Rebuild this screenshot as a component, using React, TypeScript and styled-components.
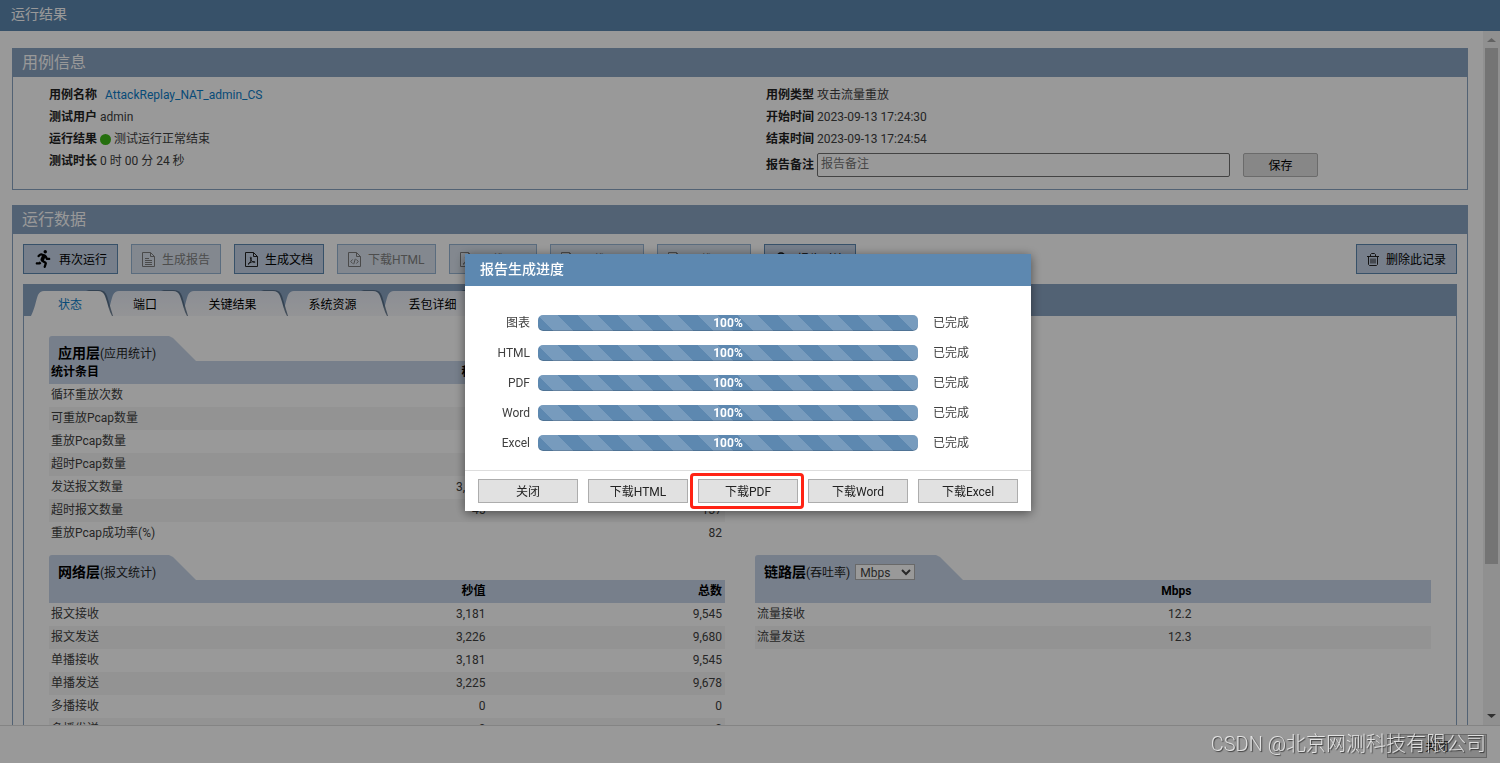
import React from "react";
import styled, { createGlobalStyle, css } from "styled-components";
import { FaRunning } from "react-icons/fa";

const blue = "#5d88b0";
const slate = "#89a3c1";
const pale = "#c6d4e8";

const GlobalStyle = createGlobalStyle`
  *, *::before, *::after { box-sizing: border-box; }
  body {
    margin: 0;
    background: #fff;
    color: #404040;
    font: 12px/22px Roboto, "Noto Sans CJK SC", sans-serif;
  }
  button, input, select { font-family: inherit; font-size: 12px; }
`;

const Page = styled.div`
  display: flex;
  flex-direction: column;
  height: 100vh;
  overflow: hidden;
`;

const PageHeader = styled.header`
  flex: none;
  height: 31px;
  padding: 0 11px;
  background: ${blue};
`;

const PageTitle = styled.h1`
  margin: 0;
  font-size: 14px;
  font-weight: 400;
  line-height: 28px;
  color: #fff;
`;

const Body = styled.div`
  flex: 1;
  min-height: 0;
  display: flex;
`;

const Content = styled.main`
  flex: 1;
  min-width: 0;
  overflow: hidden;
  padding: 17px 15px 0 12px;
  display: flex;
  flex-direction: column;
  gap: 15px;
`;

const ScrollTrack = styled.div`
  flex: none;
  width: 17px;
  padding: 0 2px;
  background: #f1f1f1;
  display: flex;
  flex-direction: column;
`;

const ScrollArrow = styled.svg`
  flex: none;
  width: 13px;
  height: 17px;
`;

const ScrollThumb = styled.div`
  flex: 516;
  background: #c1c1c1;
`;

const ScrollRest = styled.div`
  flex: 144;
`;

const PageFooter = styled.footer`
  flex: none;
  display: flex;
  justify-content: flex-end;
  height: 38px;
  padding: 8px 13px 0;
  border-top: 1px solid #ddd;
`;

const Panel = styled.section`
  flex: none;
  border: 1px solid ${slate};
`;

const PanelTitle = styled.h2`
  margin: 0;
  height: 28px;
  padding-left: 9px;
  background: ${slate};
  color: #fff;
  font-size: 16px;
  font-weight: 400;
  line-height: 27px;
`;

const InfoGrid = styled.div`
  display: grid;
  grid-template-columns: 1fr 1fr;
  padding: 7px 0 12px;
`;

const InfoColumn = styled.div<{ $indent: number }>`
  padding-left: ${(p) => p.$indent}px;
`;

const InfoRow = styled.div`
  display: flex;
  align-items: center;
  gap: 3px;
  min-height: 22px;
`;

const NoteRow = styled(InfoRow)`
  padding-top: 3px;
`;

const Label = styled.label`
  font-weight: 700;
  color: #222;
`;

const CaseLink = styled.a`
  margin-left: 5px;
  color: #0d7dc9;
  text-decoration: none;
`;

const Dot = styled.span`
  width: 11px;
  height: 11px;
  border-radius: 50%;
  background: #3fba18;
`;

const NoteInput = styled.input`
  width: 413px;
  height: 24px;
  padding: 0 3px 2px;
  border: 1px solid #707070;
  border-radius: 2px;
  background: #fff;
  &::placeholder { color: #757575; }
`;

const SaveButton = styled.button`
  width: 75px;
  height: 24px;
  margin-left: 10px;
  padding: 0 0 1px;
  border: 1px solid #b2b2b2;
  border-radius: 2px;
  background: #e2e2e2;
  color: #000;
`;

const Toolbar = styled.div`
  display: flex;
  gap: 13px;
  padding: 10px;
`;

const ToolButton = styled.button<{ $end?: boolean }>`
  display: flex;
  align-items: center;
  gap: 7px;
  height: 30px;
  padding: 0 10px 2px;
  border: 1px solid ${blue};
  background: ${pale};
  color: #000;
  white-space: nowrap;
  svg { position: relative; top: 1px; }
  ${(p) => p.$end && css`margin-left: auto;`}
  &:disabled {
    border-color: #96b4d2;
    background: #dae3ee;
    color: #808080;
  }
`;

const TabPanel = styled.div`
  margin: 0 10px;
  border: 1px solid ${slate};
  border-top: 0;
`;

const TabBar = styled.div`
  display: flex;
  align-items: flex-end;
  height: 32px;
  padding-left: 7px;
  background: ${slate};
`;

const TabButton = styled.button<{ $active?: boolean; $order: number; $width: number }>`
  position: relative;
  z-index: ${(p) => p.$order};
  width: ${(p) => p.$width}px;
  height: 25px;
  padding: 0 0 0 3px;
  border: 0;
  background: none;
  color: ${(p) => (p.$active ? "#0d7dc9" : "#000")};
`;

const TabShape = styled.svg`
  position: absolute;
  z-index: -1;
  left: 0;
  top: 0;
  overflow: visible;
`;

const Blocks = styled.div`
  display: grid;
  grid-template-columns: 1fr 1fr;
  gap: 10px 30px;
  padding: 20px 25px;
`;

const Block = styled.section<{ $column: number }>`
  grid-column: ${(p) => p.$column};
`;

const BlockTab = styled.div<{ $wide?: boolean }>`
  display: flex;
  align-items: flex-end;
  width: ${(p) => (p.$wide ? 208 : 147)}px;
  height: 25px;
  padding-left: 9px;
  border-top-left-radius: 3px;
  background: ${pale};
  color: #222;
  line-height: 14px;
  clip-path: polygon(0 0, calc(100% - 27px) 0, calc(100% - 23px) 2px, 100% 100%, 0 100%);
`;

const BlockTitle = styled.h3`
  margin: 0;
  font-size: 14px;
  font-weight: 700;
  line-height: 15px;
  color: #000;
`;

const UnitSelect = styled.select`
  width: 60px;
  height: 16px;
  margin-left: 5px;
  padding: 0;
  border: 1px solid #b0b0b0;
  background: #fff;
  color: #444;
  line-height: 14px;
`;

const DataTable = styled.table`
  width: 100%;
  table-layout: fixed;
  border-collapse: collapse;
  line-height: 21px;
  th, td {
    height: 23px;
    padding: 0 3px 0 2px;
    text-align: right;
  }
  th:first-child, td:first-child { text-align: left; }
  th { background: ${pale}; color: #000; font-weight: 700; }
  col:first-child { width: 30%; }
  tbody tr:nth-child(even) { background: #f6f6f6; }
`;

const Backdrop = styled.div`
  position: fixed;
  inset: 0;
  z-index: 20;
  display: flex;
  align-items: center;
  justify-content: center;
  padding: 2px 4px 0 0;
  background: rgba(0, 0, 0, 0.4);
`;

const Dialog = styled.div`
  width: 566px;
  background: #fff;
  box-shadow: 0 2px 10px rgba(0, 0, 0, 0.5);
`;

const DialogTitle = styled.h2`
  margin: 0;
  padding: 0 15px 2px;
  background: ${blue};
  color: #fff;
  font-size: 14px;
  font-weight: 500;
  line-height: 30px;
`;

const ProgressList = styled.div`
  padding: 22px 0 12px;
`;

const ProgressRow = styled.div`
  display: grid;
  grid-template-columns: 65px 380px 1fr;
  column-gap: 8px;
  align-items: center;
  height: 30px;
`;

const ProgressLabel = styled.span`
  text-align: right;
`;

const ProgressBar = styled.div`
  height: 16px;
  border-radius: 5px;
  background-color: ${blue};
  background-image: linear-gradient(
    45deg,
    rgba(255, 255, 255, 0.16) 25%,
    transparent 25%,
    transparent 50%,
    rgba(255, 255, 255, 0.16) 50%,
    rgba(255, 255, 255, 0.16) 75%,
    transparent 75%
  );
  background-size: 40px 40px;
  box-shadow: inset 0 -1px 0 rgba(0, 0, 0, 0.15);
  color: #fff;
  font-weight: 700;
  line-height: 16px;
  text-align: center;
`;

const ProgressStatus = styled.span`
  padding-left: 7px;
`;

const DialogActions = styled.div`
  display: flex;
  gap: 10px;
  padding: 8px 13px;
  border-top: 1px solid #ddd;
`;

const ActionButton = styled.button`
  position: relative;
  width: 100px;
  height: 24px;
  padding: 0 0 1px;
  border: 1px solid #adadad;
  background: #e1e1e1;
  color: #222;
`;

const Highlight = styled.span`
  position: absolute;
  inset: -7px -7px -7px -9px;
  border: 3px solid #ff2314;
  border-radius: 4px;
`;

const Watermark = styled.div`
  position: fixed;
  z-index: 30;
  right: 14px;
  bottom: 6px;
  color: rgba(255, 255, 255, 0.75);
  font-size: 20px;
  font-weight: 300;
  line-height: 26px;
  text-shadow: 1px 1px 1px rgba(0, 0, 0, 0.6);
  pointer-events: none;
`;

type Glyph = "text" | "pdf" | "code" | "report";

const glyphs: Record<Glyph, string> = {
  text: "M3 6.5h4M3 8.5h7M3 10.5h7M3 12.5h7",
  pdf: "M3 12.3c1.8-1.2 3.4-3.6 3.3-6.6 0-.8-1-.8-1 0 .2 2.6 2 4.3 4 4.7 1 .2 1-.8 0-.8-2 0-4 .6-6.3 2.7z",
  code: "M4.5 7.5 2.8 9.5l1.7 2M8.5 7.5l1.7 2-1.7 2M7.3 6.8l-1.6 5.4",
  report: "M3.5 12.5v-3M6.5 12.5v-6M9.5 12.5v-4",
};

const DocIcon = ({ glyph, muted }: { glyph: Glyph; muted?: boolean }) => (
  <svg width="13" height="15" viewBox="0 0 13 15" fill="none" stroke={muted ? "#7c7c7c" : "#222"} aria-hidden>
    <path d="M.5.5h8l4 4v10h-12z" />
    <path d="M8.5.5v4h4" />
    <path d={glyphs[glyph]} />
  </svg>
);

const SearchDocIcon = () => (
  <svg width="15" height="15" viewBox="0 0 15 15" fill="none" stroke="#111" strokeWidth="1.5" aria-hidden>
    <circle cx="6" cy="5" r="4" />
    <path d="M9 8l5 6" />
  </svg>
);

const TrashIcon = () => (
  <svg width="12" height="13" viewBox="0 0 12 13" fill="none" stroke="#222" aria-hidden>
    <path d="M0 3.5h12M3.5 3V1.5l1-1h3l1 1V3M1.5 3.5v8l1 1h7l1-1v-8M4 5.5v5M6 5.5v5M8 5.5v5" />
  </svg>
);

const tabs = [
  { name: "状态", width: 75 },
  { name: "端口", width: 75 },
  { name: "关键结果", width: 100 },
  { name: "系统资源", width: 100 },
  { name: "丢包详细", width: 100 },
];

const Tab = ({ name, width, index }: { name: string; width: number; index: number }) => {
  const w = width + 6;
  const shape = `M0 25C4 17 5 9 7 4Q9 0 13 0H${w - 14}Q${w - 9} 0 ${w - 7} 5C${w - 4} 13 ${w - 3} 20 ${w} 25Z`;
  return (
    <TabButton role="tab" aria-selected={index === 0} $active={index === 0} $order={10 - index} $width={width}>
      <TabShape width={w} height="25" aria-hidden>
        <defs>
          <linearGradient id={`tab${index}`} x1="0" y1="0" x2="0" y2="1">
            <stop offset="0" stopColor={index ? "#e9edf6" : "#fff"} />
            <stop offset="1" stopColor={index ? "#f6f7fa" : "#fff"} />
          </linearGradient>
        </defs>
        <path
          d={`M${w - 26} 0L${w - 23} -1H${w - 13}Q${w - 7} -1 ${w - 5} 5L${w + 1} 25H${w - 6}Z`}
          fill="#455c74"
          opacity="0.75"
        />
        <path d={shape} fill={`url(#tab${index})`} />
      </TabShape>
      {name}
    </TabButton>
  );
};

const Table = ({ heads, rows }: { heads: string[]; rows: string[][] }) => (
  <DataTable>
    <colgroup>
      {heads.map((_, i) => (
        <col key={i} />
      ))}
    </colgroup>
    <thead>
      <tr>
        {heads.map((h, i) => (
          <th key={i}>{h}</th>
        ))}
      </tr>
    </thead>
    <tbody>
      {rows.map((r) => (
        <tr key={r[0]}>
          {r.map((c, i) => (
            <td key={i}>{c}</td>
          ))}
        </tr>
      ))}
    </tbody>
  </DataTable>
);

const appRows = [
  ["循环重放次数", "", ""],
  ["可重放Pcap数量", "", ""],
  ["重放Pcap数量", "", ""],
  ["超时Pcap数量", "", ""],
  ["发送报文数量", "3,226", "9,680"],
  ["超时报文数量", "45", "137"],
  ["重放Pcap成功率(%)", "", "82"],
];

const netRows = [
  ["报文接收", "3,181", "9,545"],
  ["报文发送", "3,226", "9,680"],
  ["单播接收", "3,181", "9,545"],
  ["单播发送", "3,225", "9,678"],
  ["多播接收", "0", "0"],
  ["多播发送", "0", "0"],
];

const linkRows = [
  ["流量接收", "12.2", ""],
  ["流量发送", "12.3", ""],
];

const actions = ["关闭", "下载HTML", "下载PDF", "下载Word", "下载Excel"];

export default function App() {
  return (
    <>
      <GlobalStyle />
      <Page>
        <PageHeader>
          <PageTitle>运行结果</PageTitle>
        </PageHeader>
        <Body>
          <Content>
            <Panel>
              <PanelTitle>用例信息</PanelTitle>
              <InfoGrid>
                <InfoColumn $indent={36}>
                  <InfoRow>
                    <Label as="span">用例名称</Label>
                    <CaseLink href="#case">AttackReplay_NAT_admin_CS</CaseLink>
                  </InfoRow>
                  <InfoRow>
                    <Label as="span">测试用户</Label>
                    <span>admin</span>
                  </InfoRow>
                  <InfoRow>
                    <Label as="span">运行结果</Label>
                    <Dot />
                    <span>测试运行正常结束</span>
                  </InfoRow>
                  <InfoRow>
                    <Label as="span">测试时长</Label>
                    <span>0 时 00 分 24 秒</span>
                  </InfoRow>
                </InfoColumn>
                <InfoColumn $indent={26}>
                  <InfoRow>
                    <Label as="span">用例类型</Label>
                    <span>攻击流量重放</span>
                  </InfoRow>
                  <InfoRow>
                    <Label as="span">开始时间</Label>
                    <span>2023-09-13 17:24:30</span>
                  </InfoRow>
                  <InfoRow>
                    <Label as="span">结束时间</Label>
                    <span>2023-09-13 17:24:54</span>
                  </InfoRow>
                  <NoteRow>
                    <Label htmlFor="note">报告备注</Label>
                    <NoteInput id="note" placeholder="报告备注" />
                    <SaveButton>保存</SaveButton>
                  </NoteRow>
                </InfoColumn>
              </InfoGrid>
            </Panel>

            <Panel>
              <PanelTitle>运行数据</PanelTitle>
              <Toolbar>
                <ToolButton>
                  <FaRunning size={18} aria-hidden />
                  再次运行
                </ToolButton>
                <ToolButton disabled>
                  <DocIcon glyph="text" muted />
                  生成报告
                </ToolButton>
                <ToolButton>
                  <DocIcon glyph="pdf" />
                  生成文档
                </ToolButton>
                <ToolButton disabled>
                  <DocIcon glyph="code" muted />
                  下载HTML
                </ToolButton>
                <ToolButton disabled>
                  <DocIcon glyph="pdf" muted />
                  下载PDF
                </ToolButton>
                <ToolButton disabled>
                  <DocIcon glyph="text" muted />
                  下载Word
                </ToolButton>
                <ToolButton disabled>
                  <DocIcon glyph="report" muted />
                  下载Excel
                </ToolButton>
                <ToolButton>
                  <SearchDocIcon />
                  报告对比
                </ToolButton>
                <ToolButton $end>
                  <TrashIcon />
                  删除此记录
                </ToolButton>
              </Toolbar>
              <TabPanel>
                <TabBar role="tablist">
                  {tabs.map((t, i) => (
                    <Tab key={t.name} name={t.name} width={t.width} index={i} />
                  ))}
                </TabBar>
                <Blocks>
                  <Block $column={1}>
                    <BlockTab>
                      <BlockTitle>应用层</BlockTitle>
                      (应用统计)
                    </BlockTab>
                    <Table heads={["统计条目", "秒值", "总数"]} rows={appRows} />
                  </Block>
                  <Block $column={1}>
                    <BlockTab>
                      <BlockTitle>网络层</BlockTitle>
                      (报文统计)
                    </BlockTab>
                    <Table heads={["", "秒值", "总数"]} rows={netRows} />
                  </Block>
                  <Block $column={2}>
                    <BlockTab $wide>
                      <BlockTitle>链路层</BlockTitle>
                      (吞吐率)
                      <UnitSelect aria-label="吞吐率" defaultValue="Mbps">
                        <option>Mbps</option>
                        <option>Kbps</option>
                      </UnitSelect>
                    </BlockTab>
                    <Table heads={["", "Mbps", ""]} rows={linkRows} />
                  </Block>
                </Blocks>
              </TabPanel>
            </Panel>
          </Content>
          <ScrollTrack aria-hidden>
            <ScrollArrow viewBox="0 0 13 17">
              <path d="M2 11h9L6.500 7z" fill="#a3a3a3" />
            </ScrollArrow>
            <ScrollThumb />
            <ScrollRest />
            <ScrollArrow viewBox="0 0 13 17">
              <path d="M2 6h9L6.500 10z" fill="#505050" />
            </ScrollArrow>
          </ScrollTrack>
        </Body>
        <PageFooter>
          <ActionButton>关闭</ActionButton>
        </PageFooter>
      </Page>

      <Backdrop>
        <Dialog role="dialog" aria-labelledby="progress-title">
          <DialogTitle id="progress-title">报告生成进度</DialogTitle>
          <ProgressList>
            {["图表", "HTML", "PDF", "Word", "Excel"].map((name) => (
              <ProgressRow key={name}>
                <ProgressLabel>{name}</ProgressLabel>
                <ProgressBar role="progressbar" aria-label={name} aria-valuenow={100}>
                  100%
                </ProgressBar>
                <ProgressStatus>已完成</ProgressStatus>
              </ProgressRow>
            ))}
          </ProgressList>
          <DialogActions>
            {actions.map((a) => (
              <ActionButton key={a}>
                {a}
                {a === "下载PDF" && <Highlight />}
              </ActionButton>
            ))}
          </DialogActions>
        </Dialog>
      </Backdrop>
      <Watermark>CSDN @北京网测科技有限公司</Watermark>
    </>
  );
}
